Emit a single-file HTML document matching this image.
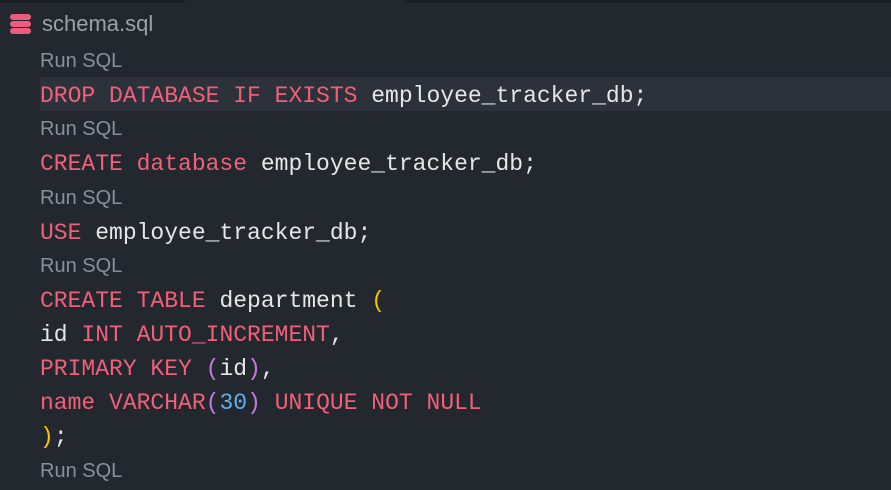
<!DOCTYPE html>
<html><head><meta charset="utf-8"><style>
body{margin:0;width:891px;height:490px;background:#23272e;overflow:hidden;position:relative;font-family:"Liberation Mono",monospace;}
.top{position:absolute;left:0;top:0;width:891px;height:3px;background:#1b1e23;}
.top2{position:absolute;left:185px;top:0;width:220px;height:3px;background:#23272e;}
.hl{position:absolute;left:40px;top:77px;width:851px;height:34px;background:#2c313a;}
.l{position:absolute;left:40px;font-size:23px;color:#e6e6e6;white-space:pre;line-height:34px;}
.r{position:absolute;left:40px;font-family:"Liberation Sans",sans-serif;font-size:20px;color:#8b9098;line-height:34px;}
.k{color:#f0607a}.y{color:#f5c400}.p{color:#c678dd}.n{color:#61afef}
.t{position:absolute;left:42px;top:9px;font-family:"Liberation Sans",sans-serif;font-size:22px;color:#9ca1a8;line-height:30px;}
</style></head><body>
<div class="top"></div><div class="top2"></div>
<svg style="position:absolute;left:10px;top:14px" width="21" height="20" viewBox="0 0 21 20">
<rect x="0" y="0" width="21" height="6" rx="3" fill="#ee5b80"/>
<rect x="0" y="7" width="21" height="6" rx="3" fill="#ee5b80"/>
<rect x="0" y="14" width="21" height="6" rx="3" fill="#ee5b80"/>
</svg>
<div class="t">schema.sql</div>
<div class="hl"></div>
<div class="r" style="top:44px">Run SQL</div>
<div class="l" style="top:79px"><span class="k">DROP DATABASE IF EXISTS</span> employee_tracker_db;</div>
<div class="r" style="top:112px">Run SQL</div>
<div class="l" style="top:147px"><span class="k">CREATE database</span> employee_tracker_db;</div>
<div class="r" style="top:181px">Run SQL</div>
<div class="l" style="top:216px"><span class="k">USE</span> employee_tracker_db;</div>
<div class="r" style="top:249px">Run SQL</div>
<div class="l" style="top:284px"><span class="k">CREATE TABLE</span> department <span class="y">(</span></div>
<div class="l" style="top:318px">id <span class="k">INT AUTO_INCREMENT</span>,</div>
<div class="l" style="top:352px"><span class="k">PRIMARY KEY</span> <span class="p">(</span>id<span class="p">)</span>,</div>
<div class="l" style="top:386px"><span class="k">name VARCHAR</span><span class="p">(</span><span class="n">30</span><span class="p">)</span> <span class="k">UNIQUE NOT NULL</span></div>
<div class="l" style="top:420px"><span class="y">)</span>;</div>
<div class="r" style="top:454px">Run SQL</div>
</body></html>
